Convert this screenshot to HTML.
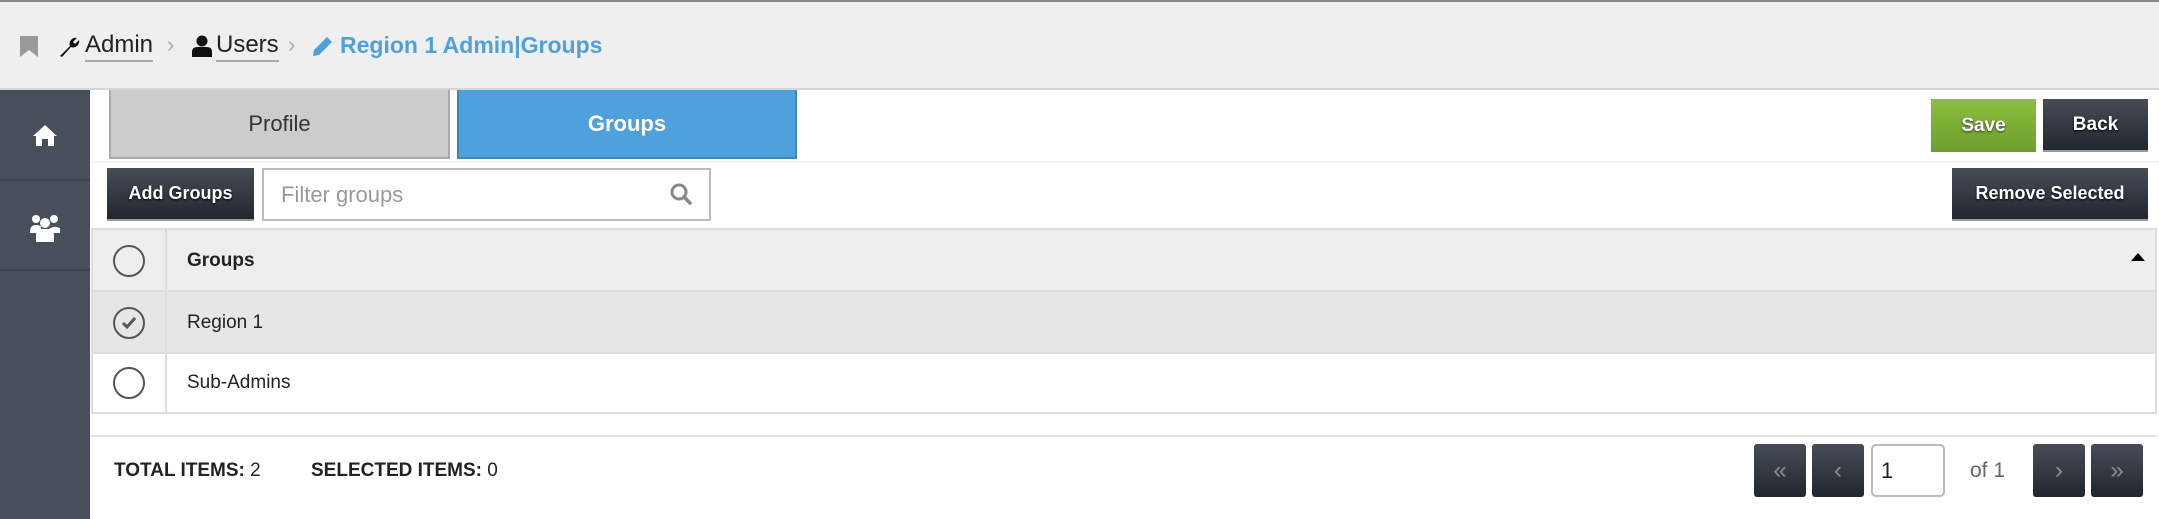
<!DOCTYPE html>
<html><head><meta charset="utf-8"><style>
*{box-sizing:border-box;margin:0;padding:0}
body{width:2159px;height:519px;position:relative;overflow:hidden;background:#fff;font-family:"Liberation Sans",sans-serif;color:#222}
.a{position:absolute}
.dark{background:linear-gradient(#474d57,#22262e);color:#fff;font-weight:bold;text-shadow:0 1px 2px #000;display:flex;align-items:center;justify-content:center;border-bottom:2px solid #999}
.pg{font-weight:normal!important;color:#8a8f97!important;font-size:24px!important;text-shadow:none!important}
.circ{position:absolute;width:32px;height:32px;border:2.5px solid #555;border-radius:50%}
</style></head><body>
<div class="a" style="left:0;top:0;width:2159px;height:90px;background:#efefef;border-top:2px solid #888;border-bottom:2px solid #d6d6d6"></div>
<svg class="a" style="left:20px;top:36px" width="18" height="21"><path d="M0 0H18V21L9 14L0 21Z" fill="#999"/></svg>
<svg class="a" style="left:58px;top:36px" width="22" height="22" viewBox="0 0 22 22"><path d="M2 20L12 10A6 6 0 0 1 19 2L15 6L17 8L21 4A6 6 0 0 1 13 11L4 21Z" fill="#111"/></svg>
<div class="a" style="left:85px;top:30px;font-size:24px;line-height:30px;color:#222;border-bottom:2px solid #aaa">Admin</div>
<div class="a" style="left:167px;top:32px;font-size:22px;color:#aaa">›</div>
<svg class="a" style="left:192px;top:35px" width="20" height="22" viewBox="0 0 20 22"><circle cx="10" cy="6" r="5.5" fill="#111"/><path d="M0 22V17Q0 12 5 12H15Q20 12 20 17V22Z" fill="#111"/></svg>
<div class="a" style="left:216px;top:30px;font-size:24px;line-height:30px;color:#222;border-bottom:2px solid #aaa">Users</div>
<div class="a" style="left:288px;top:32px;font-size:22px;color:#aaa">›</div>
<svg class="a" style="left:312px;top:35px" width="22" height="22" viewBox="0 0 22 22"><path d="M1 21L2 15L15 2L20 7L7 20Z" fill="#4ea1dc"/></svg>
<div class="a" style="left:340px;top:30px;font-size:23px;line-height:30px;color:#4ea1dc;font-weight:bold">Region 1 Admin|Groups</div>
<div class="a" style="left:0;top:90px;width:90px;height:429px;background:#474f5a"></div>
<div class="a" style="left:0;top:179px;width:90px;height:2px;background:#3c434d"></div>
<div class="a" style="left:0;top:269px;width:90px;height:2px;background:#3c434d"></div>
<svg class="a" style="left:32px;top:124px" width="26" height="22" viewBox="0 0 26 22"><path d="M13 1L1 12H4V22H10V15H16V22H22V12H25Z" fill="#fff"/></svg>
<svg class="a" style="left:30px;top:212px" width="30" height="30" viewBox="0 0 30 30"><circle cx="6" cy="7" r="4" fill="#fff"/><circle cx="24" cy="7" r="4" fill="#fff"/><circle cx="15" cy="11" r="5" fill="#fff"/><path d="M0 20Q0 13 6 13T11 17H19Q24 13 30 16V21H0Z" fill="#fff"/><path d="M6 30V23Q6 17 15 17T24 23V30Z" fill="#fff"/></svg>
<div class="a" style="left:109px;top:90px;width:341px;height:69px;background:#cccccc;border:2px solid #aaa;border-top:none;display:flex;align-items:center;justify-content:center;font-size:22px;color:#333">Profile</div>
<div class="a" style="left:457px;top:90px;width:340px;height:69px;background:#4ea1dc;border:2px solid #3d86bb;border-top:none;display:flex;align-items:center;justify-content:center;font-size:22px;color:#fff;font-weight:bold">Groups</div>
<div class="a" style="left:1931px;top:99px;width:105px;height:53px;background:linear-gradient(#8cbf3c,#6e9e2f);color:#fff;font-weight:bold;font-size:19px;display:flex;align-items:center;justify-content:center;text-shadow:0 1px 2px #333">Save</div>
<div class="a dark" style="left:2043px;top:99px;width:105px;height:53px;font-size:19px">Back</div>
<div class="a" style="left:90px;top:161px;width:2069px;height:2px;background:#f4f4f4"></div>
<div class="a dark" style="left:107px;top:168px;width:147px;height:53px;font-size:18px">Add Groups</div>
<div class="a" style="left:262px;top:168px;width:449px;height:53px;border:2px solid #bbb;font-size:22px;color:#999;padding:12px 0 0 17px">Filter groups</div>
<svg class="a" style="left:669px;top:182px" width="24" height="24" viewBox="0 0 24 24"><circle cx="10" cy="10" r="7" fill="none" stroke="#888" stroke-width="3"/><path d="M15 15L21 21" stroke="#888" stroke-width="3.5" stroke-linecap="round"/></svg>
<div class="a dark" style="left:1952px;top:168px;width:196px;height:53px;font-size:18px">Remove Selected</div>
<div class="a" style="left:91px;top:228px;width:2066px;height:186px;border:2px solid #ddd"></div>
<div class="a" style="left:93px;top:230px;width:2062px;height:62px;background:#eeeeee;border-bottom:2px solid #ddd"></div>
<div class="a" style="left:93px;top:292px;width:2062px;height:62px;background:#e6e6e6;border-bottom:2px solid #ddd"></div>
<div class="a" style="left:165px;top:230px;width:2px;height:182px;background:#ddd"></div>
<div class="circ" style="left:113px;top:245px"></div>
<div class="circ" style="left:113px;top:307px"></div>
<svg class="a" style="left:120px;top:314px" width="18" height="18"><path d="M3 9L7 13L15 4" fill="none" stroke="#555" stroke-width="3"/></svg>
<div class="circ" style="left:113px;top:367px"></div>
<div class="a" style="left:187px;top:250px;font-size:19px;font-weight:bold">Groups</div>
<svg class="a" style="left:2131px;top:253px" width="14" height="8"><path d="M0 8L7 0L14 8Z" fill="#000"/></svg>
<div class="a" style="left:187px;top:312px;font-size:19px">Region 1</div>
<div class="a" style="left:187px;top:372px;font-size:19px">Sub-Admins</div>
<div class="a" style="left:91px;top:435px;width:2066px;height:2px;background:#e2e2e2"></div>
<div class="a" style="left:114px;top:460px;font-size:19px"><b>TOTAL ITEMS:</b> 2</div>
<div class="a" style="left:311px;top:460px;font-size:19px"><b>SELECTED ITEMS:</b> 0</div>
<div class="a dark pg" style="left:1754px;top:444px;width:52px;height:53px;border:none;border-radius:3px">«</div>
<div class="a dark pg" style="left:1812px;top:444px;width:52px;height:53px;border:none;border-radius:3px">‹</div>
<div class="a" style="left:1871px;top:444px;width:74px;height:53px;border:2px solid #bbb;border-radius:5px;font-size:22px;padding:12px 0 0 8px">1</div>
<div class="a" style="left:1970px;top:459px;font-size:21px;color:#666">of 1</div>
<div class="a dark pg" style="left:2033px;top:444px;width:52px;height:53px;border:none;border-radius:3px">›</div>
<div class="a dark pg" style="left:2091px;top:444px;width:52px;height:53px;border:none;border-radius:3px">»</div>
</body></html>
